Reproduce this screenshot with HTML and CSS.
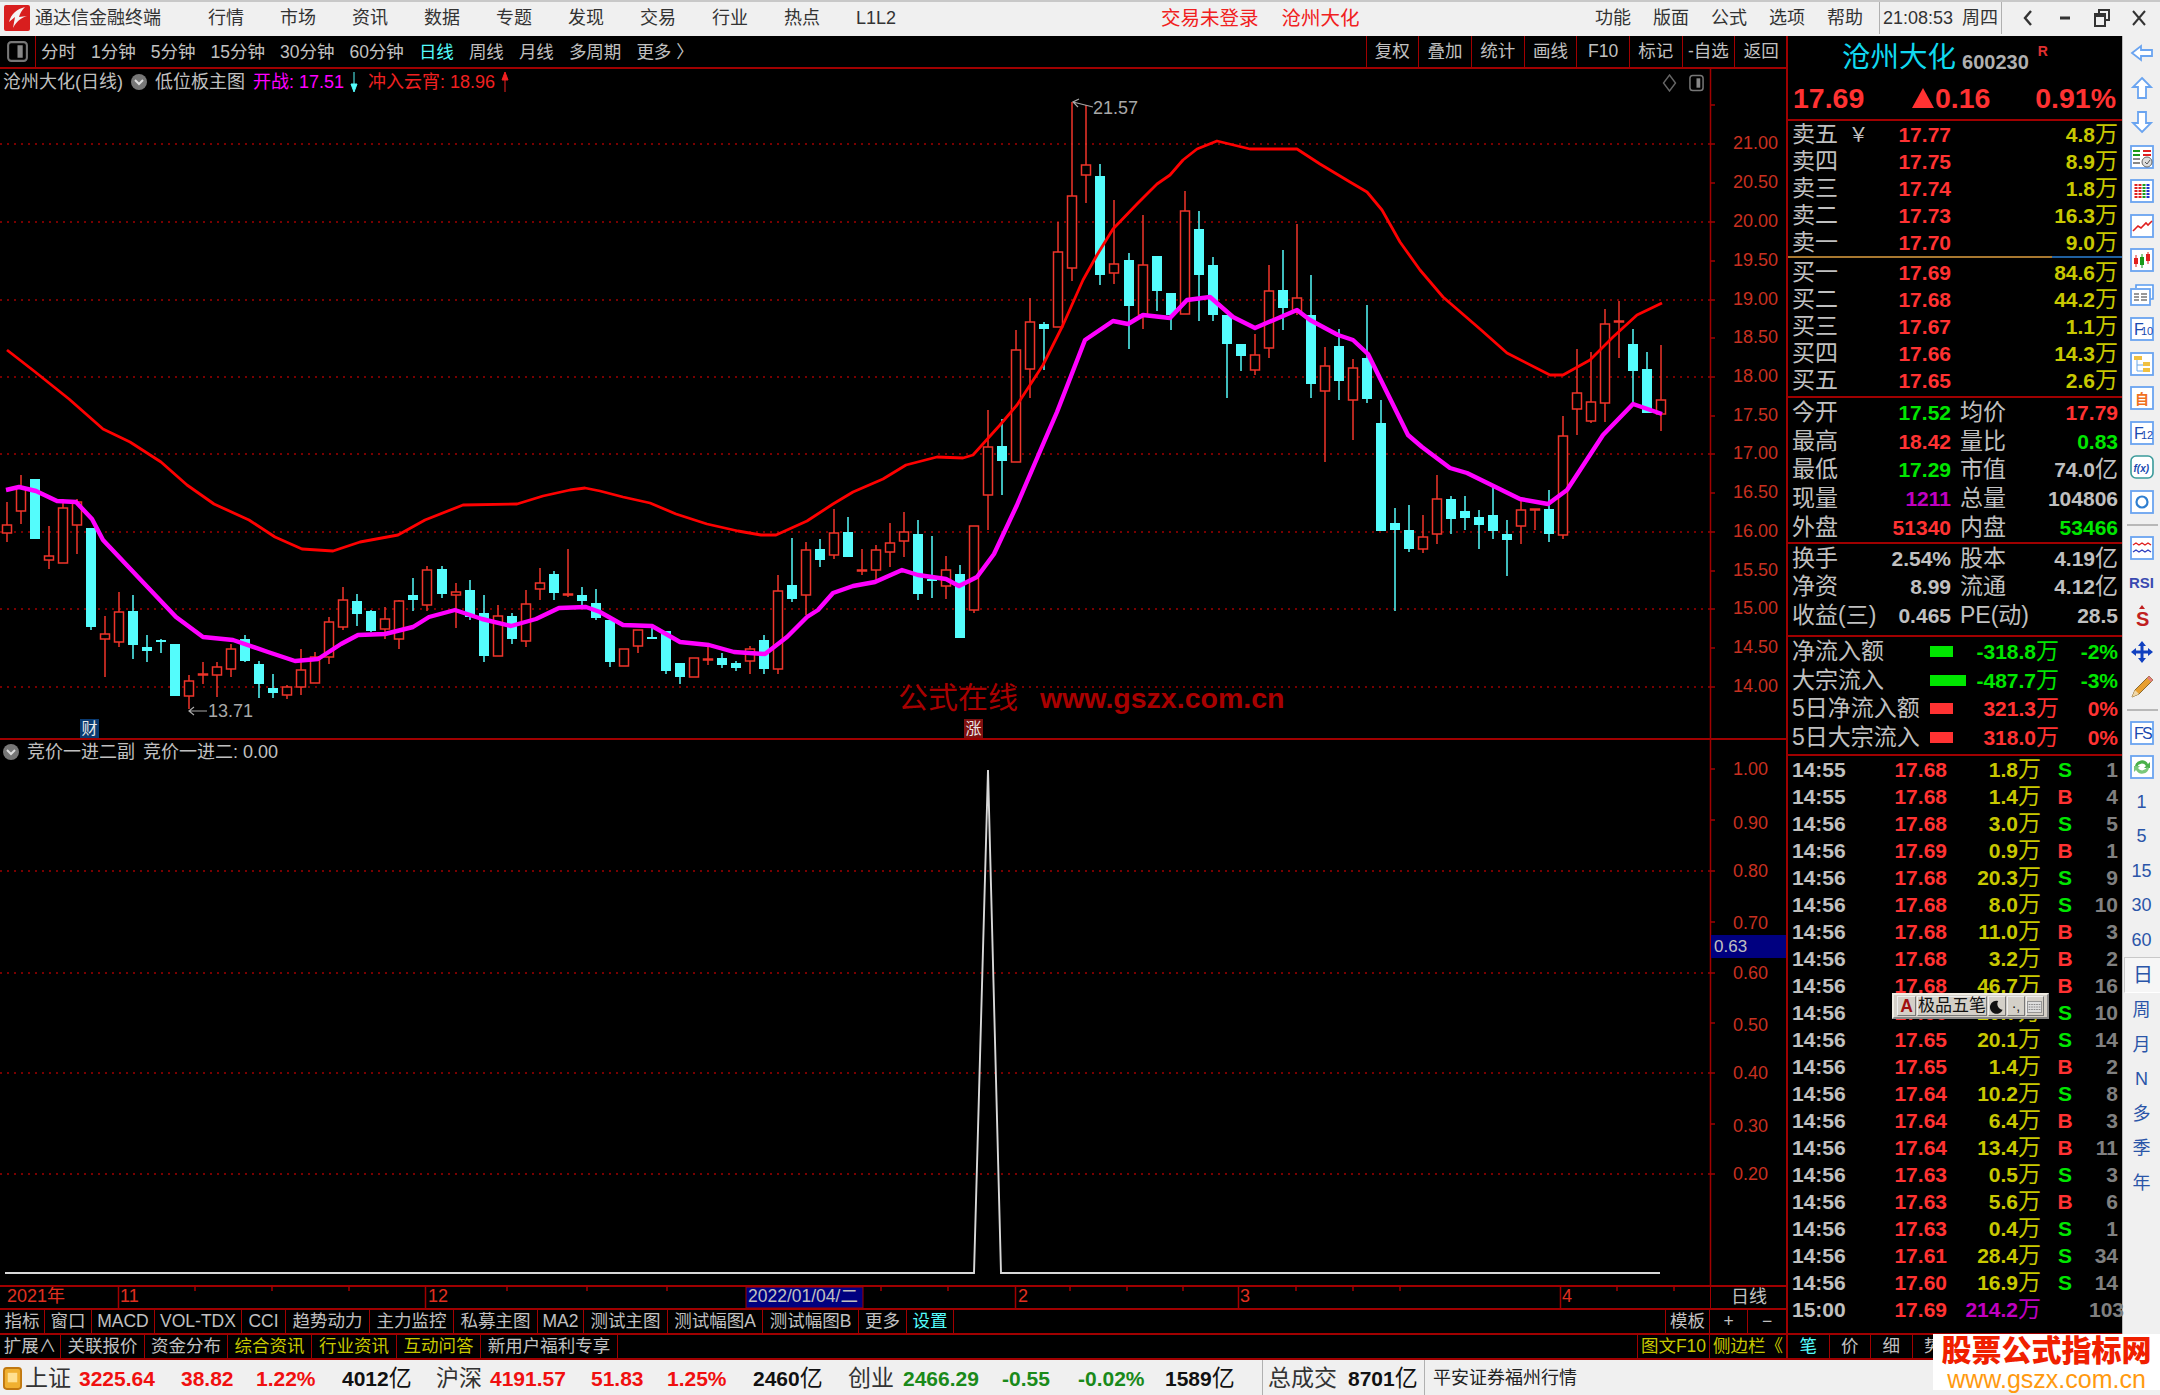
FILE: index.html
```html
<!DOCTYPE html>
<html lang="zh-CN">
<head>
    <meta charset="UTF-8">
    <title>通达信金融终端</title>
    <link rel="stylesheet" href="styles.css">
</head>
<body>
    <header class="titlebar">
        <div class="title-left">
            <svg class="logo" viewBox="0 0 26 26"><rect width="26" height="26" rx="2" fill="#d81e1e"/><path d="M21 2 C13 4 7 9 5 17 L11 12 L9 23 C13 15 19 12 23 11 L15 12 C16 8 18 5 21 2Z" fill="#f4f4f4"/></svg>
            <span class="app-name">通达信金融终端</span>
            <nav class="menu"><span>行情</span><span>市场</span><span>资讯</span><span>数据</span><span>专题</span><span>发现</span><span>交易</span><span>行业</span><span>热点</span><span>L1L2</span></nav>
        </div>
        <div class="title-mid"><span>交易未登录</span><span>沧州大化</span></div>
        <div class="title-right">
            <nav class="menu menu-r"><span>功能</span><span>版面</span><span>公式</span><span>选项</span><span>帮助</span></nav>
            <div class="clock"><span>21:08:53</span><span>周四</span></div>
            <div class="winbtns">
                <svg viewBox="0 0 16 20"><path d="M11 3 L5 10 L11 17" fill="none" stroke="#333" stroke-width="2.4"/></svg>
                <svg viewBox="0 0 16 20"><path d="M3 10 H13" stroke="#333" stroke-width="3"/></svg>
                <svg viewBox="0 0 16 20"><path d="M5 5 V2 H15 V12 H12 M1 6 H11 V18 H1Z M1 8 H11" fill="none" stroke="#333" stroke-width="2"/></svg>
                <svg viewBox="0 0 16 20"><path d="M2 3 L14 17 M14 3 L2 17" stroke="#333" stroke-width="2"/></svg>
            </div>
        </div>
    </header>

    <div class="main">
        <section class="left">
            <div class="toolbar">
                <div class="tool-box"><svg viewBox="0 0 24 24"><rect x="3" y="3" width="18" height="18" rx="3" fill="none" stroke="#777" stroke-width="2"/><rect x="12" y="6" width="5" height="12" fill="#888"/></svg></div>
                <div class="periods"><span>分时</span><span>1分钟</span><span>5分钟</span><span>15分钟</span><span>30分钟</span><span>60分钟</span><span class="on">日线</span><span>周线</span><span>月线</span><span>多周期</span><span>更多 〉</span></div>
                <div class="tool-btns"><span>复权</span><span>叠加</span><span>统计</span><span>画线</span><span>F10</span><span>标记</span><span>-自选</span><span>返回</span></div>
            </div>

            <div class="chart chart-up">
                <svg id="upper" class="plot" viewBox="0 67 1787 669">
                    <g class="grid-lines">
                        <path d="M0 142H1710M0 220H1710M0 298H1710M0 375H1710M0 452H1710M0 530H1710M0 607H1710M0 685H1710"/>
                    </g>
                    <path class="axis" d="M1710.5 67V736 M1710 103h5M1710 142h5M1710 181h5M1710 220h5M1710 259h5M1710 298h5M1710 336h5M1710 375h5M1710 414h5M1710 452h5M1710 491h5M1710 530h5M1710 569h5M1710 607h5M1710 646h5M1710 685h5"/>
                    <g class="axis-text">
                        <text x="1733" y="147">21.00</text><text x="1733" y="186">20.50</text><text x="1733" y="225">20.00</text><text x="1733" y="264">19.50</text><text x="1733" y="303">19.00</text><text x="1733" y="341">18.50</text><text x="1733" y="380">18.00</text><text x="1733" y="419">17.50</text><text x="1733" y="457">17.00</text><text x="1733" y="496">16.50</text><text x="1733" y="535">16.00</text><text x="1733" y="574">15.50</text><text x="1733" y="612">15.00</text><text x="1733" y="651">14.50</text><text x="1733" y="690">14.00</text>
                    </g>
                    <g id="candles"></g>
                    <polyline id="ma-red" class="ma-red"/>
                    <polyline id="ma-pink" class="ma-pink"/>
                    <path class="note-arrow" d="M1093 105 L1073 100 M1079 97 L1073 100 L1078 105 M207 709 H189 M194 705 L189 709 L194 713"/>
                    <text class="note" x="1093" y="112">21.57</text>
                    <text class="note" x="208" y="715">13.71</text>
                </svg>
                <div class="chart-title">
                    <span>沧州大化(日线)</span>
                    <svg class="chev" viewBox="0 0 16 16"><circle cx="8" cy="8" r="8" fill="#777"/><path d="M4 6 L8 10 L12 6" fill="none" stroke="#ddd" stroke-width="2"/></svg>
                    <span>低位板主图</span>
                    <span class="pink">开战: 17.51</span><svg class="tall-arrow cyan" viewBox="0 0 8 20"><path d="M4 0V14M1 12L4 20L7 12Z"/></svg>
                    <span class="red">冲入云宵: 18.96</span><svg class="tall-arrow red" viewBox="0 0 8 20"><path d="M4 20V6M1 8L4 0L7 8Z"/></svg>
                </div>
                <div class="chart-icons">
                    <svg viewBox="0 0 14 18"><path d="M7 1 L13 9 L7 17 L1 9Z" fill="none" stroke="#666" stroke-width="1.4"/></svg>
                    <svg viewBox="0 0 16 18"><rect x="1" y="1" width="14" height="16" rx="3" fill="none" stroke="#777" stroke-width="1.6"/><rect x="8" y="4" width="4" height="10" fill="#888"/></svg>
                </div>
                <span class="badge badge-cai">财</span>
                <span class="badge badge-zhang">涨</span>
                <div class="watermark"><span>公式在线</span><b>www.gszx.com.cn</b></div>
            </div>

            <div class="chart chart-low">
                <svg class="plot" viewBox="0 738 1787 545">
                    <g class="grid-lines">
                        <path d="M0 869H1710M0 971H1710M0 1071H1710M0 1172H1710"/>
                    </g>
                    <path class="axis" d="M1710.5 738V1283 M1710 767h5M1710 818h5M1710 869h5M1710 920h5M1710 971h5M1710 1021h5M1710 1071h5M1710 1122h5M1710 1172h5"/>
                    <g class="axis-text">
                        <text x="1733" y="773">1.00</text><text x="1733" y="827">0.90</text><text x="1733" y="875">0.80</text><text x="1733" y="927">0.70</text><text x="1733" y="977">0.60</text><text x="1733" y="1029">0.50</text><text x="1733" y="1077">0.40</text><text x="1733" y="1130">0.30</text><text x="1733" y="1178">0.20</text>
                    </g>
                    <polyline class="sig-line" points="5,1271 974,1271 988,768 1001,1271 1660,1271"/>
                    <rect class="cross-box" x="1711" y="933" width="75" height="23"/>
                    <text class="cross-text" x="1714" y="950">0.63</text>
                </svg>
                <div class="chart-title chart-title-low">
                    <svg class="chev" viewBox="0 0 16 16"><circle cx="8" cy="8" r="8" fill="#777"/><path d="M4 6 L8 10 L12 6" fill="none" stroke="#ddd" stroke-width="2"/></svg>
                    <span>竞价一进二副</span><span>竞价一进二: 0.00</span>
                </div>
            </div>

            <div class="timeaxis">
                <svg viewBox="0 1285 1710 21">
                    <path class="axis" d="M118.5 1285V1306M425.5 1285V1306M1015.5 1285V1306M1238.5 1285V1306M1560.5 1285V1306M195 1285v4M272 1285v4M349 1285v4M507 1285v4M587 1285v4M667 1285v4M881 1285v4M948 1285v4M1070 1285v4M1127 1285v4M1183 1285v4M1296 1285v4M1353 1285v4M1400 1285v4M1617 1285v4M1674 1285v4"/>
                    <g class="time-text">
                        <text x="7" y="1300">2021年</text><text x="120" y="1300">11</text><text x="428" y="1300">12</text><text x="1018" y="1300">2</text><text x="1240" y="1300">3</text><text x="1562" y="1300">4</text>
                    </g>
                    <rect class="date-box" x="746" y="1285" width="117" height="21"/>
                    <text class="date-text" x="748" y="1300">2022/01/04/二</text>
                </svg>
                <span class="axis-cell">日线</span>
            </div>

            <div class="tabs tabs-a">
                <span>指标</span><span>窗口</span><span>MACD</span><span>VOL-TDX</span><span>CCI</span><span>趋势动力</span><span>主力监控</span><span>私募主图</span><span>MA2</span><span>测试主图</span><span>测试幅图A</span><span>测试幅图B</span><span>更多</span><span class="cyan">设置</span>
                <span class="blank"></span><span>模板</span><span>+</span><span>−</span>
            </div>
            <div class="tabs tabs-b">
                <span>扩展∧</span><span>关联报价</span><span>资金分布</span><span class="yel">综合资讯</span><span class="yel">行业资讯</span><span class="yel">互动问答</span><span>新用户福利专享</span>
                <span class="blank"></span><span class="yel">图文F10</span><span class="yel">侧边栏《</span>
            </div>
        </section>

        <aside class="quote">
            <div class="q-head">
                <div class="q-name"><span class="stock">沧州大化</span><span class="code">600230</span><sup>R</sup></div>
                <div class="q-price"><span>17.69</span><span><i class="tri"></i>0.16</span><span>0.91%</span></div>
            </div>
            <div class="q-sec book">
                <div class="row"><span class="lb">卖五 <small>￥</small></span><span class="up">17.77</span><span class="vol">4.8<i>万</i></span></div>
                <div class="row"><span class="lb">卖四</span><span class="up">17.75</span><span class="vol">8.9<i>万</i></span></div>
                <div class="row"><span class="lb">卖三</span><span class="up">17.74</span><span class="vol">1.8<i>万</i></span></div>
                <div class="row"><span class="lb">卖二</span><span class="up">17.73</span><span class="vol">16.3<i>万</i></span></div>
                <div class="row"><span class="lb">卖一</span><span class="up">17.70</span><span class="vol">9.0<i>万</i></span></div>
            </div>
            <div class="book-line"></div>
            <div class="q-sec book book-buy">
                <div class="row"><span class="lb">买一</span><span class="up">17.69</span><span class="vol">84.6<i>万</i></span></div>
                <div class="row"><span class="lb">买二</span><span class="up">17.68</span><span class="vol">44.2<i>万</i></span></div>
                <div class="row"><span class="lb">买三</span><span class="up">17.67</span><span class="vol">1.1<i>万</i></span></div>
                <div class="row"><span class="lb">买四</span><span class="up">17.66</span><span class="vol">14.3<i>万</i></span></div>
                <div class="row"><span class="lb">买五</span><span class="up">17.65</span><span class="vol">2.6<i>万</i></span></div>
            </div>
            <div class="q-sec stats stats-a">
                <div class="row"><span class="lb">今开</span><span class="down">17.52</span><span class="lb">均价</span><span class="up">17.79</span></div>
                <div class="row"><span class="lb">最高</span><span class="up">18.42</span><span class="lb">量比</span><span class="down">0.83</span></div>
                <div class="row"><span class="lb">最低</span><span class="down">17.29</span><span class="lb">市值</span><span class="gray">74.0<i>亿</i></span></div>
                <div class="row"><span class="lb">现量</span><span class="mag">1211</span><span class="lb">总量</span><span class="gray">104806</span></div>
                <div class="row"><span class="lb">外盘</span><span class="up">51340</span><span class="lb">内盘</span><span class="down">53466</span></div>
            </div>
            <div class="q-sec stats stats-b">
                <div class="row"><span class="lb">换手</span><span class="gray">2.54%</span><span class="lb">股本</span><span class="gray">4.19<i>亿</i></span></div>
                <div class="row"><span class="lb">净资</span><span class="gray">8.99</span><span class="lb">流通</span><span class="gray">4.12<i>亿</i></span></div>
                <div class="row"><span class="lb">收益(三)</span><span class="gray">0.465</span><span class="lb">PE(动)</span><span class="gray">28.5</span></div>
            </div>
            <div class="q-sec flows">
                <div class="row"><span class="lb">净流入额</span><span class="bar bar-g"></span><span class="down">-318.8<i>万</i></span><span class="down">-2%</span></div>
                <div class="row"><span class="lb">大宗流入</span><span class="bar bar-g bar-long"></span><span class="down">-487.7<i>万</i></span><span class="down">-3%</span></div>
                <div class="row"><span class="lb">5日净流入额</span><span class="bar bar-r"></span><span class="up">321.3<i>万</i></span><span class="up">0%</span></div>
                <div class="row"><span class="lb">5日大宗流入</span><span class="bar bar-r"></span><span class="up">318.0<i>万</i></span><span class="up">0%</span></div>
            </div>
            <div class="ticks">
                <div class="row"><span>14:55</span><span class="up">17.68</span><span class="vol">1.8<i>万</i></span><span class="down">S</span><span class="cnt">1</span></div>
                <div class="row"><span>14:55</span><span class="up">17.68</span><span class="vol">1.4<i>万</i></span><span class="up">B</span><span class="cnt">4</span></div>
                <div class="row"><span>14:56</span><span class="up">17.68</span><span class="vol">3.0<i>万</i></span><span class="down">S</span><span class="cnt">5</span></div>
                <div class="row"><span>14:56</span><span class="up">17.69</span><span class="vol">0.9<i>万</i></span><span class="up">B</span><span class="cnt">1</span></div>
                <div class="row"><span>14:56</span><span class="up">17.68</span><span class="vol">20.3<i>万</i></span><span class="down">S</span><span class="cnt">9</span></div>
                <div class="row"><span>14:56</span><span class="up">17.68</span><span class="vol">8.0<i>万</i></span><span class="down">S</span><span class="cnt">10</span></div>
                <div class="row"><span>14:56</span><span class="up">17.68</span><span class="vol">11.0<i>万</i></span><span class="up">B</span><span class="cnt">3</span></div>
                <div class="row"><span>14:56</span><span class="up">17.68</span><span class="vol">3.2<i>万</i></span><span class="up">B</span><span class="cnt">2</span></div>
                <div class="row"><span>14:56</span><span class="up">17.68</span><span class="vol">46.7<i>万</i></span><span class="up">B</span><span class="cnt">16</span></div>
                <div class="row"><span>14:56</span><span class="up">17.66</span><span class="vol">20.7<i>万</i></span><span class="down">S</span><span class="cnt">10</span></div>
                <div class="row"><span>14:56</span><span class="up">17.65</span><span class="vol">20.1<i>万</i></span><span class="down">S</span><span class="cnt">14</span></div>
                <div class="row"><span>14:56</span><span class="up">17.65</span><span class="vol">1.4<i>万</i></span><span class="up">B</span><span class="cnt">2</span></div>
                <div class="row"><span>14:56</span><span class="up">17.64</span><span class="vol">10.2<i>万</i></span><span class="down">S</span><span class="cnt">8</span></div>
                <div class="row"><span>14:56</span><span class="up">17.64</span><span class="vol">6.4<i>万</i></span><span class="up">B</span><span class="cnt">3</span></div>
                <div class="row"><span>14:56</span><span class="up">17.64</span><span class="vol">13.4<i>万</i></span><span class="up">B</span><span class="cnt">11</span></div>
                <div class="row"><span>14:56</span><span class="up">17.63</span><span class="vol">0.5<i>万</i></span><span class="down">S</span><span class="cnt">3</span></div>
                <div class="row"><span>14:56</span><span class="up">17.63</span><span class="vol">5.6<i>万</i></span><span class="up">B</span><span class="cnt">6</span></div>
                <div class="row"><span>14:56</span><span class="up">17.63</span><span class="vol">0.4<i>万</i></span><span class="down">S</span><span class="cnt">1</span></div>
                <div class="row"><span>14:56</span><span class="up">17.61</span><span class="vol">28.4<i>万</i></span><span class="down">S</span><span class="cnt">34</span></div>
                <div class="row"><span>14:56</span><span class="up">17.60</span><span class="vol">16.9<i>万</i></span><span class="down">S</span><span class="cnt">14</span></div>
                <div class="row"><span>15:00</span><span class="up">17.69</span><span class="vol mag">214.2<i>万</i></span><span></span><span class="cnt">103</span></div>
            </div>
            <div class="q-tabs"><span class="cyan">笔</span><span>价</span><span>细</span><span>势</span><span>联</span><span>值</span><span>主</span><span>筹</span></div>
            <div class="ime">
                <span class="ime-a">A</span><span class="ime-name">极品五笔</span>
                <span class="ime-btn"><svg viewBox="0 0 16 16"><path d="M10 1 A7.5 7.5 0 1 0 15 11 A6.5 6.5 0 0 1 10 1Z" fill="#111"/></svg></span>
                <span class="ime-btn ime-dots">·,</span>
                <span class="ime-btn"><svg viewBox="0 0 18 14"><rect x="0.5" y="0.5" width="17" height="13" fill="#ddd" stroke="#888"/><path d="M2 4h14M2 7h14M2 10h14" stroke="#777" stroke-dasharray="2 1"/></svg></span>
            </div>
        </aside>

        <aside class="side">
            <div class="ic"><svg viewBox="0 0 24 24"><path class="arw" d="M2 12 L11 5 V9 H22 V15 H11 V19Z"/></svg></div>
            <div class="ic"><svg viewBox="0 0 24 24"><path class="arw" d="M12 2 L21 11 H16 V22 H8 V11 H3Z"/></svg></div>
            <div class="ic"><svg viewBox="0 0 24 24"><path class="arw" d="M12 22 L21 13 H16 V2 H8 V13 H3Z"/></svg></div>
            <div class="ic"><svg viewBox="0 0 24 24"><rect class="bx" x="1" y="1" width="22" height="22"/><path d="M3 6h7M3 10h7" stroke="#1a9a1a" stroke-width="2"/><path d="M13 6h8M13 10h8" stroke="#e02020" stroke-width="2"/><path d="M3 14h7M3 18h7" stroke="#888" stroke-width="2"/><circle cx="17" cy="17" r="5" fill="#ddd" stroke="#666"/><path d="M15 17l2 2 3-4" fill="none" stroke="#555"/></svg></div>
            <div class="ic"><svg viewBox="0 0 24 24"><rect class="bx" x="1" y="1" width="22" height="22"/><path d="M6 5v14" stroke="#e02020" stroke-width="3" stroke-dasharray="2 1"/><path d="M10 5v14" stroke="#e02020" stroke-width="3" stroke-dasharray="2 1"/><path d="M14 5v14" stroke="#1a9a1a" stroke-width="3" stroke-dasharray="2 1"/><path d="M18 5v14" stroke="#2030d0" stroke-width="3" stroke-dasharray="2 1"/></svg></div>
            <div class="ic"><svg viewBox="0 0 24 24"><rect class="bx" x="1" y="1" width="22" height="22"/><path d="M3 17 L8 12 L11 14 L16 9 L18 11 L22 7" fill="none" stroke="#e02020" stroke-width="1.6"/></svg></div>
            <div class="ic"><svg viewBox="0 0 24 24"><rect class="bx" x="1" y="1" width="22" height="22"/><path d="M6 7v12M18 4v12" stroke="#e02020"/><path d="M12 6v14" stroke="#1a9a1a"/><rect x="4" y="10" width="4" height="6" fill="#e02020"/><rect x="10" y="9" width="4" height="8" fill="#1a9a1a"/><rect x="16" y="6" width="4" height="7" fill="#e02020"/></svg></div>
            <div class="ic"><svg viewBox="0 0 24 24"><path d="M6 5 V2 H23 V16 H20" fill="#fff" stroke="#5a9cf0" stroke-width="1.6"/><rect class="bx" x="1" y="6" width="19" height="16"/><path d="M4 11h5M11 11h6M4 14h5M11 14h6M4 17h5M11 17h6" stroke="#777" stroke-width="1.6"/></svg></div>
            <div class="ic"><svg viewBox="0 0 24 24"><rect class="bx" x="1" y="1" width="22" height="22"/><text class="ic-t" x="4" y="18">F</text><text class="ic-s" x="11" y="18">10</text></svg></div>
            <div class="ic"><svg viewBox="0 0 24 24"><rect class="bx" x="1" y="1" width="22" height="22"/><path d="M7 8V19H13M7 13H13" fill="none" stroke="#6aa8e8"/><rect x="4" y="4" width="8" height="4" fill="#f0c040"/><rect x="13" y="10" width="7" height="4" fill="#f0c040"/><rect x="13" y="16" width="7" height="4" fill="#f0c040"/></svg></div>
            <div class="ic"><svg viewBox="0 0 24 24"><rect class="bx" x="1" y="1" width="22" height="22"/><text class="ic-zi" x="5" y="18">自</text></svg></div>
            <div class="ic"><svg viewBox="0 0 24 24"><rect class="bx" x="1" y="1" width="22" height="22"/><text class="ic-t" x="4" y="18">F</text><text class="ic-s" x="11" y="18">12</text></svg></div>
            <div class="ic"><svg viewBox="0 0 24 24"><rect x="1" y="1" width="22" height="22" rx="5" fill="#fff" stroke="#3a9a9a" stroke-width="1.6"/><text class="ic-fx" x="3.5" y="17">f(x)</text></svg></div>
            <div class="ic"><svg viewBox="0 0 24 24"><rect class="bx" x="1" y="1" width="22" height="22"/><circle cx="12" cy="12" r="5.5" fill="none" stroke="#2f7fd0" stroke-width="2.2"/></svg></div>
            <div class="sep"></div>
            <div class="ic"><svg viewBox="0 0 24 24"><rect class="bx" x="1" y="1" width="22" height="22"/><path d="M3 9 l3-2 3 2 3-2 3 2 3-2 3 2" fill="none" stroke="#e02020" stroke-width="1.4"/><path d="M3 16 l3-2 3 2 3-2 3 2 3-2 3 2" fill="none" stroke="#3040c0" stroke-width="1.4"/></svg></div>
            <div class="ic ic-word">RSI</div>
            <div class="ic"><svg viewBox="0 0 24 24"><path d="M12 0 L15 4 H9Z" fill="#c02020"/><text class="ic-dollar" x="6" y="21">S</text></svg></div>
            <div class="ic"><svg viewBox="0 0 24 24"><path d="M12 1 L16 6 H13.5 V10.5 H18 V8 L23 12 L18 16 V13.5 H13.5 V18 H16 L12 23 L8 18 H10.5 V13.5 H6 V16 L1 12 L6 8 V10.5 H10.5 V6 H8Z" fill="#1040c0"/></svg></div>
            <div class="ic"><svg viewBox="0 0 24 24"><path d="M19 2 L23 6 L9 20 L2 23 L5 16Z" fill="#e8a030" stroke="#8a6a30"/><path d="M5 16 L9 20 L2 23Z" fill="#f0d8a8"/><path d="M19 2 L23 6 L21 8 L17 4Z" fill="#e08080"/></svg></div>
            <div class="sep sep-b"></div>
            <div class="ic"><svg viewBox="0 0 24 24"><rect class="bx" x="1" y="1" width="22" height="22"/><text class="ic-t" x="4" y="18">F</text><text class="ic-t" x="12" y="18">S</text></svg></div>
            <div class="ic"><svg viewBox="0 0 24 24"><rect class="bx" x="1" y="1" width="22" height="22"/><path d="M5 11 A7 7 0 0 1 18 9 L20 7 V13 H14 L16 11 A5 5 0 0 0 7 12Z" fill="#4ab04a"/><path d="M19 13 A7 7 0 0 1 6 15 L4 17 V11 H10 L8 13 A5 5 0 0 0 17 12Z" fill="#7ac87a"/></svg></div>
            <div class="ic ic-num">1</div>
            <div class="ic ic-num">5</div>
            <div class="ic ic-num">15</div>
            <div class="ic ic-num">30</div>
            <div class="ic ic-num">60</div>
            <div class="ic ic-num ic-sel">日</div>
            <div class="ic ic-num">周</div>
            <div class="ic ic-num">月</div>
            <div class="ic ic-num">N</div>
            <div class="ic ic-num">多</div>
            <div class="ic ic-num">季</div>
            <div class="ic ic-num">年</div>
        </aside>
    </div>

    <footer class="status">
        <svg class="st-ico" viewBox="0 0 20 24"><rect x="1" y="1" width="18" height="22" rx="3" fill="#f0b030" stroke="#c07810" stroke-width="2"/><rect x="5" y="6" width="10" height="10" fill="#ffe090"/></svg>
        <span class="st-lb">上证</span><span class="st-r">3225.64</span><span class="st-r">38.82</span><span class="st-r">1.22%</span><span class="st-k">4012<i>亿</i></span>
        <span class="st-lb">沪深</span><span class="st-r">4191.57</span><span class="st-r">51.83</span><span class="st-r">1.25%</span><span class="st-k">2460<i>亿</i></span>
        <span class="st-lb">创业</span><span class="st-g">2466.29</span><span class="st-g">-0.55</span><span class="st-g">-0.02%</span><span class="st-k">1589<i>亿</i></span>
        <span class="st-lb st-sep">总成交</span><span class="st-k">8701<i>亿</i></span><span class="st-broker st-sep">平安证券福州行情</span>
    </footer>

    <div class="site-logo"><b>股票公式指标网</b><span>www.gszx.com.cn</span></div>

    <script src="chart.js"></script>
</body>
</html>
```

FILE: styles.css
```css
* {
    box-sizing: border-box;
}
html, body {
    margin: 0;
    height: 100%;
}
body {
    width: 2160px;
    height: 1395px;
    overflow: hidden;
    position: relative;
    display: flex;
    flex-direction: column;
    background: #000;
    color: #c0c0c0;
    font-family: "Liberation Sans", "Noto Sans CJK SC", sans-serif;
    font-size: 18px;
}
i {
    font-style: normal;
    font-weight: 400;
}

/* title bar */
.titlebar {
    flex: 0 0 34px;
    display: flex;
    align-items: center;
    padding-bottom: 2px;
    background: #f0f0f0;
    border-top: 2px solid #c8c8c8;
    color: #333;
    font-size: 18px;
    line-height: 22px;
}
.title-left {
    flex: 0 0 1161px;
    display: flex;
    align-items: center;
}
.logo {
    width: 26px;
    height: 26px;
    margin: 0 5px 0 4px;
}
.app-name {
    width: 173px;
}
.menu {
    display: flex;
    align-items: center;
    gap: 36px;
}
.title-mid {
    flex: 0 0 434px;
    display: flex;
    gap: 23px;
    color: #f02020;
    font-size: 19.5px;
}
.title-right {
    flex: 1;
    display: flex;
    align-items: center;
}
.menu-r {
    gap: 22px;
    width: 284px;
}
.clock {
    display: flex;
    gap: 9px;
    width: 123px;
    height: 32px;
    align-items: center;
    padding-left: 3px;
    border-left: 1px solid #b0b0b0;
    border-right: 1px solid #b0b0b0;
}
.winbtns {
    display: flex;
    gap: 21px;
    padding-left: 18px;
}
.winbtns svg {
    width: 16px;
    height: 20px;
}

/* main columns */
.main {
    flex: 0 0 1324px;
    display: flex;
    height: 1324px;
}
.left {
    flex: 0 0 1787px;
    display: flex;
    flex-direction: column;
}
.quote {
    flex: 0 0 336px;
    width: 336px;
    min-width: 0;
    position: relative;
    display: flex;
    flex-direction: column;
    border-left: 2px solid #a00000;
    margin-left: -1px;
    background: #000;
}
.side {
    flex: 1;
    background: #f0f0f0;
    display: flex;
    flex-direction: column;
    align-items: center;
    border-left: 1px solid #bbb;
}

/* period toolbar */
.toolbar {
    flex: 0 0 33px;
    height: 33px;
    display: flex;
    align-items: center;
    border-bottom: 2px solid #a00000;
    font-size: 17.5px;
    line-height: 24px;
}
.tool-box {
    width: 36px;
    height: 100%;
    padding: 3px 5px 0;
    border-right: 1px solid #a00000;
}
.tool-box svg {
    display: block;
    width: 25px;
    height: 25px;
}
.periods {
    display: flex;
    gap: 15px;
    padding: 1px 0 0 5px;
}
.on {
    color: #54fcfc;
}
.tool-btns {
    margin-left: auto;
    display: flex;
    height: 100%;
}
.tool-btns span {
    width: 52.7px;
    text-align: center;
    line-height: 31px;
    border-left: 1px solid #a00000;
}

/* charts */
.chart {
    position: relative;
}
.chart-up {
    flex: 0 0 671px;
    height: 671px;
    border-bottom: 2px solid #a00000;
}
.chart-low {
    flex: 0 0 545px;
    height: 545px;
}
.plot {
    display: block;
    width: 1787px;
    height: 100%;
}
.grid-lines path {
    stroke: #a00000;
    stroke-width: 1.6;
    stroke-dasharray: 2 5;
    fill: none;
}
.axis {
    stroke: #a00000;
    stroke-width: 1.5;
    fill: none;
}
.axis-text text {
    fill: #c83020;
    font-size: 18px;
}
.ma-red {
    fill: none;
    stroke: #f00;
    stroke-width: 2.8;
    stroke-linejoin: round;
}
.ma-pink {
    fill: none;
    stroke: #f0f;
    stroke-width: 4.4;
    stroke-linejoin: round;
}
.note {
    fill: #a8a8a8;
    font-size: 18px;
}
.note-arrow {
    fill: none;
    stroke: #a8a8a8;
    stroke-width: 1.2;
}
.sig-line {
    fill: none;
    stroke: #d8d8d8;
    stroke-width: 1.9;
}
.cross-box {
    fill: #000080;
}
.cross-text {
    fill: #c0c0c0;
    font-size: 17px;
}
.chart-title {
    position: absolute;
    top: 2px;
    left: 3px;
    display: flex;
    align-items: center;
    gap: 8px;
    font-size: 18px;
    line-height: 22px;
    white-space: nowrap;
}
.chart-title-low {
    left: 3px;
    top: 1px;
}
.chev {
    width: 16px;
    height: 16px;
}
.pink {
    color: #f0f;
}
.cyan {
    color: #54fcfc;
}
.red {
    color: #f02020;
}
.tall-arrow {
    width: 8px;
    height: 20px;
    margin-left: -2px;
    margin-right: 2px;
    fill: currentColor;
    stroke: currentColor;
    stroke-width: 1;
}
.chart-icons {
    position: absolute;
    top: 5px;
    left: 1662px;
    display: flex;
    gap: 12px;
}
.chart-icons svg {
    width: 15px;
    height: 18px;
}
.badge {
    position: absolute;
    top: 650px;
    width: 19px;
    height: 19px;
    font-size: 16px;
    line-height: 19px;
    text-align: center;
    color: #e8e8e8;
}
.badge-cai {
    left: 80px;
    background: #0a3a70;
}
.badge-zhang {
    left: 964px;
    background: #801010;
}
.watermark {
    position: absolute;
    top: 609px;
    left: 898px;
    display: flex;
    align-items: center;
    gap: 22px;
    color: #a80000;
    white-space: nowrap;
    line-height: 40px;
}
.watermark span {
    font-size: 30px;
}
.watermark b {
    font-size: 28.5px;
}

/* time axis + tabs */
.timeaxis {
    flex: 0 0 23px;
    height: 23px;
    display: flex;
    border-top: 2px solid #a00000;
}
.timeaxis svg {
    display: block;
    flex: 0 0 1710px;
    width: 1710px;
    height: 21px;
}
.time-text text {
    fill: #e03020;
    font-size: 18px;
}
.date-box {
    fill: #000080;
    stroke: #a00000;
}
.date-text {
    fill: #c0c0c0;
    font-size: 17.5px;
}
.axis-cell {
    flex: 1;
    text-align: center;
    line-height: 20px;
    border-left: 1px solid #a00000;
}
.tabs {
    display: grid;
    font-size: 17.5px;
    text-align: center;
    border-top: 2px solid #a00000;
}
.tabs span {
    border-right: 1px solid #a00000;
    white-space: nowrap;
}
.tabs-a {
    flex: 0 0 25px;
    height: 25px;
    line-height: 23px;
    grid-template-columns: 45px 47px 63px 87px 44px 84px 84px 84px 46px 84px 95px 96px 48px 47px 1fr 44px 38px 39px;
}
.tabs-b {
    flex: 0 0 27px;
    height: 27px;
    line-height: 23px;
    grid-template-columns: 61px 84px 83px 84px 85px 84px 137px 1fr 72px 77px;
    border-bottom: 2px solid #a00000;
}
.tabs .blank {
    border-right-color: #a00000;
}
.yel {
    color: #c8c800;
}

/* quote panel */
.row {
    display: grid;
    align-items: center;
    white-space: nowrap;
    line-height: 1;
}
.row > span {
    justify-self: end;
}
.lb {
    font-size: 23px;
    justify-self: start !important;
    color: #c0c0c0;
}
.lb small {
    font-size: 20px;
    margin-left: 4px;
}
.up, .down, .gray, .mag, .vol, .ticks .row > span {
    font-size: 21px;
    font-weight: 700;
}
.up {
    color: #ff3232;
}
.down {
    color: #00e600;
}
.gray {
    color: #c0c0c0;
}
.mag, .vol.mag {
    color: #c000c0;
}
.vol {
    color: #c8c800;
}
.row i {
    font-size: 23px;
}
.q-head {
    flex: 0 0 85px;
    border-bottom: 2px solid #a00000;
}
.q-name {
    height: 41px;
    padding: 2px 0 0 54px;
    display: flex;
    align-items: center;
    gap: 6px;
    line-height: 1;
}
.stock {
    font-size: 28.5px;
    color: #10d8f0;
}
.code {
    font-size: 20px;
    font-weight: 700;
    color: #b0b0b0;
    margin-top: 8px;
}
.q-name sup {
    font-size: 14px;
    font-weight: 700;
    color: #e03030;
    margin: -14px 0 0 3px;
}
.q-price {
    display: grid;
    grid-template-columns: 119px 120px 1fr;
    padding: 0 6px 0 5px;
    font-size: 28.5px;
    font-weight: 700;
    color: #ff3232;
    line-height: 42px;
}
.q-price span:last-child {
    text-align: right;
}
.tri {
    display: inline-block;
    width: 0;
    height: 0;
    border-left: 11px solid transparent;
    border-right: 11px solid transparent;
    border-bottom: 20px solid #ff3232;
    margin-right: 1px;
}
.book {
    flex: 0 0 135px;
    padding: 0 4px;
}
.book .row {
    height: 27px;
    grid-template-columns: 103px 56px 1fr;
}
.book-line {
    flex: 0 0 2px;
    background: linear-gradient(to right, #a87830 79%, #2060a0 79%);
}
.book-buy {
    flex: 0 0 140px;
    padding-top: 1px;
    padding-bottom: 2px;
    border-bottom: 2px solid #a00000;
}
.stats {
    flex: 0 0 146px;
    padding: 0 4px;
    border-bottom: 2px solid #a00000;
}
.stats .row {
    grid-template-columns: 103px 56px auto 1fr;
}
.stats .row > .lb:nth-child(3) {
    margin-left: 9px;
}
.stats-a .row {
    height: 28.8px;
}
.stats-b {
    flex: 0 0 93px;
}
.stats-b .row {
    height: 28.5px;
}
.flows {
    flex: 0 0 119px;
    padding: 0 4px;
    border-bottom: 2px solid #a00000;
}
.flows .row {
    height: 28.7px;
    grid-template-columns: 138px 41px 88px 1fr;
}
.bar {
    justify-self: start !important;
    width: 23px;
    height: 11px;
}
.bar-long {
    width: 36px;
}
.bar-g {
    background: #00e600;
}
.bar-r {
    background: #ff3232;
}
.ticks {
    flex: 1;
    min-height: 0;
    padding: 0 4px;
}
.ticks .row {
    height: 27px;
    grid-template-columns: 100px 55px 94px 48px 1fr;
}
.ticks .row > span:first-child {
    justify-self: start;
    color: #c0c0c0;
}
.ticks .row > span:nth-child(4) {
    justify-self: center;
}
.ticks .cnt {
    color: #808080;
}
.q-tabs {
    flex: 0 0 27px;
    height: 27px;
    display: flex;
    border-bottom: 2px solid #a00000;
    border-top: 2px solid #a00000;
    line-height: 23px;
    font-size: 17.5px;
    overflow: hidden;
}
.q-tabs span {
    flex: 0 0 41.5px;
    text-align: center;
    border-right: 1px solid #a00000;
}
.ime {
    position: absolute;
    top: 957px;
    left: 104px;
    width: 157px;
    height: 26px;
    display: flex;
    align-items: center;
    gap: 1px;
    padding: 0 3px;
    background: #d4d0c8;
    border: 2px solid #f0ede4;
    border-right-color: #888;
    border-bottom-color: #888;
    color: #111;
    font-size: 17.5px;
}
.ime > span {
    height: 20px;
    line-height: 18px;
    background: #d4d0c8;
    border: 1px solid #eee;
    border-right-color: #777;
    border-bottom-color: #777;
    text-align: center;
}
.ime-a {
    width: 20px;
    color: #a01010;
    font-weight: 700;
}
.ime-name {
    width: 72px;
    white-space: nowrap;
    font-size: 17px;
}
.ime-btn {
    width: 19px;
}
.ime-btn svg {
    width: 15px;
    height: 14px;
    vertical-align: -2px;
}
.ime-dots {
    font-size: 14px;
}

/* right icon strip */
.ic {
    flex: 0 0 34.5px;
    width: 100%;
    display: flex;
    align-items: center;
    justify-content: center;
}
.ic svg {
    width: 24px;
    height: 24px;
}
.arw {
    fill: #fff;
    stroke: #6aa4f0;
    stroke-width: 1.8;
}
.bx {
    fill: #fff;
    stroke: #6aa4f0;
    stroke-width: 1.8;
}
.ic-t {
    font-size: 16px;
    fill: #1a4ab0;
}
.ic-s {
    font-size: 11px;
    fill: #1a4ab0;
}
.ic-zi {
    font-size: 14px;
    font-weight: 700;
    fill: #f07020;
}
.ic-fx {
    font-size: 10px;
    font-style: italic;
    font-weight: 700;
    fill: #1a4ab0;
}
.ic-dollar {
    font-size: 20px;
    font-weight: 700;
    fill: #c02020;
}
.ic-word {
    color: #3a4ab0;
    font-size: 15px;
    font-weight: 700;
}
.ic-num {
    color: #2a55a8;
    font-size: 18px;
    line-height: 1;
}
.ic-sel {
    flex-basis: 36px;
    margin: 0 0 0 2px;
    background: #f6f6f6;
    border: 1px solid #c8c8c8;
    border-right: none;
    border-bottom-color: #fff;
    font-size: 20px;
}
.sep {
    flex: 0 0 12px;
    width: 100%;
    position: relative;
}
.sep::after {
    content: "";
    display: block;
    height: 2px;
    margin: 5px 2px 0 4px;
    background: #b8b8b8;
}

/* bottom status bar */
.status {
    flex: 1;
    display: grid;
    grid-template-columns: 22px 54px 102px 75px 86px 94px 54px 101px 76px 86px 95px 55px 99px 76px 87px 97px 86px 76px 1fr;
    align-items: center;
    padding-left: 3px;
    background: #f0f0f0;
    color: #222;
    white-space: nowrap;
    line-height: 1;
}
.st-ico {
    width: 19px;
    height: 23px;
}
.st-lb {
    font-size: 23px;
    color: #333;
}
.st-r, .st-g, .st-k {
    font-size: 21px;
    font-weight: 700;
}
.st-r {
    color: #f01010;
}
.st-g {
    color: #1a8a1a;
}
.st-k {
    color: #111;
}
.st-k i {
    font-size: 23px;
}
.st-sep {
    height: 36px;
    line-height: 36px;
    padding-left: 5px;
    border-left: 1px solid #b0b0b0;
}
.st-broker {
    font-size: 18px;
    padding-left: 8px;
}
.site-logo {
    position: absolute;
    left: 1933px;
    top: 1334px;
    width: 227px;
    height: 56px;
    background: #fff;
    display: flex;
    flex-direction: column;
    align-items: center;
}
.site-logo b {
    font-size: 30px;
    line-height: 34px;
    color: #f02000;
    font-weight: 900;
}
.site-logo span {
    font-size: 25px;
    line-height: 22px;
    color: #ff9a10;
}
```

FILE: chart.js
```js
// candle data in page pixels: type (1 red, 0 cyan), high, body top, body bottom, low
const candles = [
    [1,500,523,531,540],[1,473,486,509,522],[0,477,477,537,537],[1,524,554,558,567],[1,497,506,561,561],
    [1,497,500,523,552],[0,526,526,625,628],[1,614,632,637,675],[1,590,610,640,645],[0,593,609,643,657],
    [0,633,645,649,660],[0,637,638,640,651],[0,642,642,694,694],[1,673,679,694,707],[1,660,672,673,682],
    [1,660,665,673,695],[1,642,647,667,675],[0,633,637,659,660],[0,659,662,682,696],[0,672,686,691,696],
    [1,683,685,693,697],[1,647,668,685,693],[1,650,655,681,681],[1,615,620,655,662],[1,585,598,625,628],
    [0,592,599,612,624],[0,608,609,629,630],[1,605,617,627,637],[1,598,599,637,647],[0,576,593,598,609],
    [1,564,568,603,609],[0,564,567,592,596],[1,581,590,593,626],[0,578,588,615,618],[0,593,611,654,660],
    [1,603,614,654,654],[0,611,614,637,642],[1,588,602,639,645],[1,566,581,587,598],[0,569,572,591,598],
    [1,547,592,593,595],[0,585,593,599,603],[0,587,601,616,618],[0,618,618,660,665],[1,647,647,664,664],
    [1,628,628,644,651],[0,622,635,636,637],[0,629,629,669,672],[0,661,661,675,682],[1,656,656,675,675],
    [1,645,657,658,663],[0,651,656,663,666],[0,659,661,666,669],[1,644,647,659,672],[0,633,638,667,672],
    [1,573,589,667,672],[0,536,583,597,600],[1,540,548,593,613],[0,537,547,558,565],[1,507,531,553,557],
    [0,515,530,555,555],[1,547,568,569,573],[1,543,548,568,578],[1,521,541,550,565],[1,510,530,539,555],
    [0,518,532,592,598],[0,534,577,578,596],[1,554,568,584,597],[0,563,572,636,636],[1,524,524,608,611],
    [1,408,445,493,528],[0,417,444,459,493],[1,328,348,460,460],[1,296,320,367,396],[0,320,322,327,368],
    [1,220,250,325,325],[1,100,194,266,279],[1,103,163,173,201],[0,162,174,273,283],[1,198,262,271,282],
    [0,251,258,304,347],[1,213,263,313,327],[0,254,254,289,309],[0,291,291,313,328],[1,189,209,312,312],
    [0,209,227,273,319],[0,255,263,313,319],[0,313,313,342,396],[0,342,342,354,369],[1,332,353,368,373],
    [1,263,289,346,356],[0,248,288,306,328],[1,222,296,310,313],[0,273,313,382,396],[1,345,364,389,460],
    [0,327,344,379,398],[1,357,366,398,438],[0,303,356,397,401],[0,398,421,529,529],[0,506,521,528,609],
    [0,503,528,547,550],[1,513,535,547,551],[1,473,497,532,542],[0,494,497,517,532],[0,494,509,516,528],
    [0,508,515,523,547],[0,485,513,529,537],[0,518,532,538,574],[1,499,508,524,542],[1,507,507,508,528],
    [0,488,507,532,540],[1,414,434,533,537],[1,347,391,407,433],[1,350,400,419,421],[1,307,322,401,420],
    [1,299,319,320,356],[0,327,342,369,402],[0,350,367,411,411],[1,343,398,412,429]
];

const maRed = [7,348,34,369,69,397,103,427,130,440,161,460,187,483,214,502,249,518,275,535,302,547,333,549,360,540,398,533,425,518,463,503,517,502,543,494,570,488,585,486,600,489,623,495,650,501,676,512,707,522,738,529,761,533,776,533,807,519,833,502,853,490,883,477,906,463,937,455,963,456,973,453,1000,423,1017,403,1043,363,1063,323,1083,278,1097,253,1113,227,1137,202,1157,182,1170,173,1183,158,1197,147,1217,139,1250,147,1297,147,1320,162,1350,180,1367,190,1382,208,1400,240,1420,268,1443,295,1480,327,1507,351,1550,373,1563,373,1590,358,1613,335,1637,313,1662,301];

const maPink = [6,488,19,485,36,489,57,499,76,500,92,517,103,538,138,575,176,615,203,635,233,638,268,650,295,659,318,657,341,642,358,633,385,632,413,625,429,615,455,608,482,617,511,624,536,617,559,606,586,605,600,610,623,623,652,624,680,640,709,643,734,650,765,652,787,635,807,615,818,608,833,591,853,584,875,580,902,568,918,573,946,577,959,584,977,575,994,552,1017,503,1044,440,1057,410,1085,338,1113,319,1128,322,1143,313,1170,316,1187,298,1210,295,1233,315,1255,326,1297,308,1310,318,1338,333,1353,338,1368,352,1408,433,1422,445,1450,466,1467,471,1520,497,1548,502,1567,488,1603,433,1633,402,1662,412];

const svgNs = 'http://www.w3.org/2000/svg';
const group = document.getElementById('candles');

function addShape(name, attrs) {
    const el = document.createElementNS(svgNs, name);
    for (const key in attrs) {
        el.setAttribute(key, attrs[key]);
    }
    group.appendChild(el);
}

candles.forEach(function(c, i) {
    const x = Math.round(6.9 + i * 14.02);
    const color = c[0] ? '#f0342a' : '#54fcfc';
    const wick = { stroke: color, 'stroke-width': 1.5, x1: x, x2: x };
    if (c[1] < c[2]) {
        addShape('line', Object.assign({ y1: c[1], y2: c[2] }, wick));
    }
    if (c[4] > c[3]) {
        addShape('line', Object.assign({ y1: c[3], y2: c[4] }, wick));
    }
    if (c[0]) {
        addShape('rect', { x: x - 4.5, y: c[2], width: 9, height: Math.max(c[3] - c[2], 1), fill: '#000', stroke: color, 'stroke-width': 1.5 });
    } else {
        addShape('rect', { x: x - 5, y: c[2], width: 10, height: Math.max(c[3] - c[2], 2), fill: color });
    }
});

function toPoints(list) {
    const out = [];
    for (let i = 0; i < list.length; i += 2) {
        out.push(list[i] + ',' + list[i + 1]);
    }
    return out.join(' ');
}

document.getElementById('ma-red').setAttribute('points', toPoints(maRed));
document.getElementById('ma-pink').setAttribute('points', toPoints(maPink));
```
